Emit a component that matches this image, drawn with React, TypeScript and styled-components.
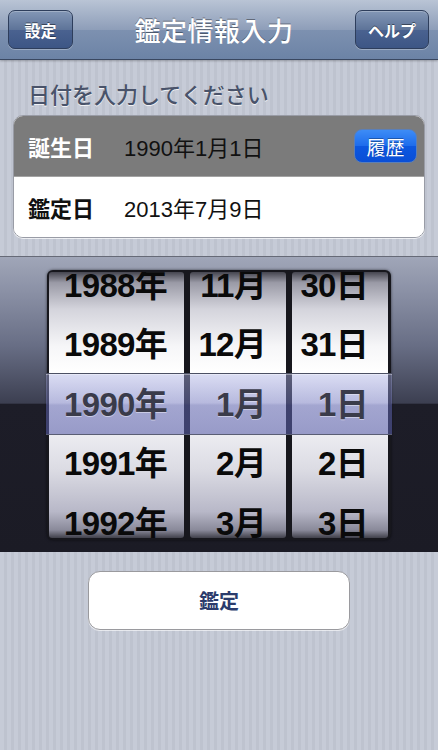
import styled, { createGlobalStyle } from "styled-components";

const GlobalStyle = createGlobalStyle`
  html, body {
    margin: 0;
    padding: 0;
  }
  body {
    font-family: "Liberation Sans", "Noto Sans CJK JP", sans-serif;
  }
`;

const jp = `"Liberation Sans", "Noto Sans CJK JP", sans-serif`;

const Page = styled.div`
  width: 438px;
  height: 750px;
  overflow: hidden;
  display: flex;
  flex-direction: column;
  background-color: #c4c9d5;
  background-image: repeating-linear-gradient(
    90deg,
    #c6cbd7 0px,
    #c6cbd7 4px,
    #bec3cf 4px,
    #bec3cf 7px
  );
`;

const NavBar = styled.div`
  height: 59px;
  display: flex;
  align-items: center;
  justify-content: space-between;
  padding: 0 9px 0 8px;
  background: linear-gradient(180deg, #b9c4d5 0%, #8e9eb9 50%, #7d91b0 51%, #6c83a6 100%);
  border-bottom: 1px solid #3a4861;
  box-shadow: 0 1px 2px rgba(0, 0, 0, 0.25);
`;

const NavButton = styled.button<{ $w: number }>`
  width: ${({ $w }) => $w}px;
  height: 39px;
  border-radius: 7px;
  border: 1px solid #2e3e5c;
  background: linear-gradient(180deg, #8397b6 0%, #5e7499 50%, #4a6290 51%, #3d5685 100%);
  box-shadow: inset 0 1px 0 rgba(255, 255, 255, 0.25), 0 1px 0 rgba(255, 255, 255, 0.3);
  color: #fff;
  font-family: ${jp};
  font-size: 16px;
  font-weight: 700;
  text-shadow: 0 -1px 0 rgba(0, 0, 0, 0.45);
  padding: 0;
`;

const Title = styled.h1`
  margin: 0;
  font-family: ${jp};
  font-size: 26px;
  font-weight: 500;
  color: #fff;
  text-shadow: 0 -1px 0 rgba(0, 0, 0, 0.4);
  letter-spacing: 0.5px;
`;

const Prompt = styled.div`
  margin: 21px 0 0 28px;
  height: 30px;
  font-family: ${jp};
  font-size: 22px;
  font-weight: 500;
  line-height: 30px;
  color: #49536a;
  text-shadow: 0 1px 0 rgba(255, 255, 255, 0.8);
`;

const Card = styled.div`
  margin: 4px 13px 0 13px;
  border: 1px solid #999ca6;
  border-radius: 10px;
  overflow: hidden;
  background: #fff;
  box-shadow: 0 1px 0 rgba(255, 255, 255, 0.7);
`;

const Row = styled.div<{ $active?: boolean }>`
  height: 60px;
  display: flex;
  align-items: center;
  padding: 0 7px 0 14px;
  background: ${({ $active }) => ($active ? "#7b7b7b" : "#ffffff")};
  & + & {
    border-top: 1px solid #a3a3a3;
  }
`;

const RowLabel = styled.span<{ $active?: boolean }>`
  width: 96px;
  font-family: ${jp};
  font-size: 22px;
  font-weight: 700;
  color: ${({ $active }) => ($active ? "#ffffff" : "#111111")};
`;

const RowValue = styled.span`
  flex: 1;
  font-family: ${jp};
  font-size: 22px;
  color: #111;
`;

const HistoryButton = styled.button`
  width: 63px;
  height: 34px;
  border-radius: 8px;
  border: 1px solid #5b7fb8;
  background: linear-gradient(180deg, #3d8cf6 0%, #1d6cec 50%, #0c57e0 51%, #0a4fd6 100%);
  color: #fff;
  font-family: ${jp};
  font-size: 19px;
  padding: 0;
  text-shadow: 0 -1px 0 rgba(0, 0, 0, 0.3);
`;

const PickerBand = styled.div`
  margin-top: 18px;
  height: 296px;
  border-top: 1px solid #666a77;
  background: linear-gradient(
    180deg,
    #a0a6b8 0%,
    #8a90a5 12%,
    #686e85 30%,
    #3c3f51 49.5%,
    #1d1d28 50%,
    #1b1b25 100%
  );
  display: flex;
  justify-content: center;
  padding-top: 13px;
  box-sizing: border-box;
`;

const Frame = styled.div`
  position: relative;
  width: 344px;
  height: 270px;
  box-sizing: border-box;
  padding: 2px;
  display: flex;
  gap: 6px;
  border-radius: 6px;
  background: #17171d;
  box-shadow: 0 0 3px rgba(0, 0, 0, 0.6);
`;

const Wheel = styled.div<{ $w: number; $pad: number }>`
  width: ${({ $w }) => $w}px;
  height: 100%;
  overflow: hidden;
  border-radius: 3px;
  padding-right: ${({ $pad }) => $pad}px;
  box-sizing: border-box;
  background: linear-gradient(
    180deg,
    #45454f 0%,
    #9a9aa6 4%,
    #d4d4dc 14%,
    #f6f6f8 28%,
    #ffffff 38%,
    #f0f0f4 58%,
    #dcdce4 74%,
    #b8b8c8 90%,
    #8a8a9a 97%,
    #40404a 100%
  );
`;

const WheelList = styled.div`
  margin-top: -19px;
`;

const Item = styled.div<{ $selected?: boolean }>`
  position: relative;
  z-index: 2;
  height: 59.5px;
  display: flex;
  align-items: center;
  justify-content: flex-end;
  font-family: ${jp};
  font-size: 33px;
  font-weight: 700;
  letter-spacing: -0.7px;
  color: ${({ $selected }) => ($selected ? "#3a3b4a" : "#0a0a0a")};
  text-shadow: ${({ $selected }) =>
    $selected ? "0 1px 0 rgba(230, 230, 245, 0.6)" : "none"};
`;

const Selection = styled.div`
  position: absolute;
  z-index: 1;
  left: -1px;
  right: -1px;
  top: 103px;
  height: 60px;
  border-top: 1px solid #4c5064;
  border-bottom: 1px solid #5a5e74;
  background: linear-gradient(
    180deg,
    rgba(175, 180, 230, 0.45) 0%,
    rgba(120, 125, 195, 0.5) 48%,
    rgba(95, 100, 175, 0.55) 52%,
    rgba(90, 95, 170, 0.58) 100%
  );
  box-shadow: inset 0 1px 0 rgba(255, 255, 255, 0.35);
`;

const ActionWrap = styled.div`
  display: flex;
  justify-content: center;
  margin-top: 19px;
`;

const ActionButton = styled.button`
  width: 262px;
  height: 59px;
  border-radius: 12px;
  border: 1px solid #9a9a9e;
  background: #fff;
  box-shadow: 0 1px 0 rgba(255, 255, 255, 0.6);
  color: #2b3c6c;
  font-family: ${jp};
  font-size: 20px;
  font-weight: 700;
  padding: 0;
`;

const wheels = [
  { w: 135, pad: 17, items: ["1988年", "1989年", "1990年", "1991年", "1992年"] },
  { w: 96, pad: 20, items: ["11月", "12月", "1月", "2月", "3月"] },
  { w: 96, pad: 20, items: ["30日", "31日", "1日", "2日", "3日"] },
];

export default function App() {
  return (
    <Page>
      <GlobalStyle />
      <NavBar>
        <NavButton $w={65}>設定</NavButton>
        <Title>鑑定情報入力</Title>
        <NavButton $w={74}>ヘルプ</NavButton>
      </NavBar>

      <Prompt>日付を入力してください</Prompt>
      <Card>
        <Row $active>
          <RowLabel $active>誕生日</RowLabel>
          <RowValue>1990年1月1日</RowValue>
          <HistoryButton>履歴</HistoryButton>
        </Row>
        <Row>
          <RowLabel>鑑定日</RowLabel>
          <RowValue>2013年7月9日</RowValue>
        </Row>
      </Card>

      <PickerBand>
        <Frame>
          {wheels.map((wheel, i) => (
            <Wheel key={i} $w={wheel.w} $pad={wheel.pad}>
              <WheelList>
                {wheel.items.map((item, j) => (
                  <Item key={item} $selected={j === 2}>
                    {item}
                  </Item>
                ))}
              </WheelList>
            </Wheel>
          ))}
          <Selection />
        </Frame>
      </PickerBand>

      <ActionWrap>
        <ActionButton>鑑定</ActionButton>
      </ActionWrap>
    </Page>
  );
}
